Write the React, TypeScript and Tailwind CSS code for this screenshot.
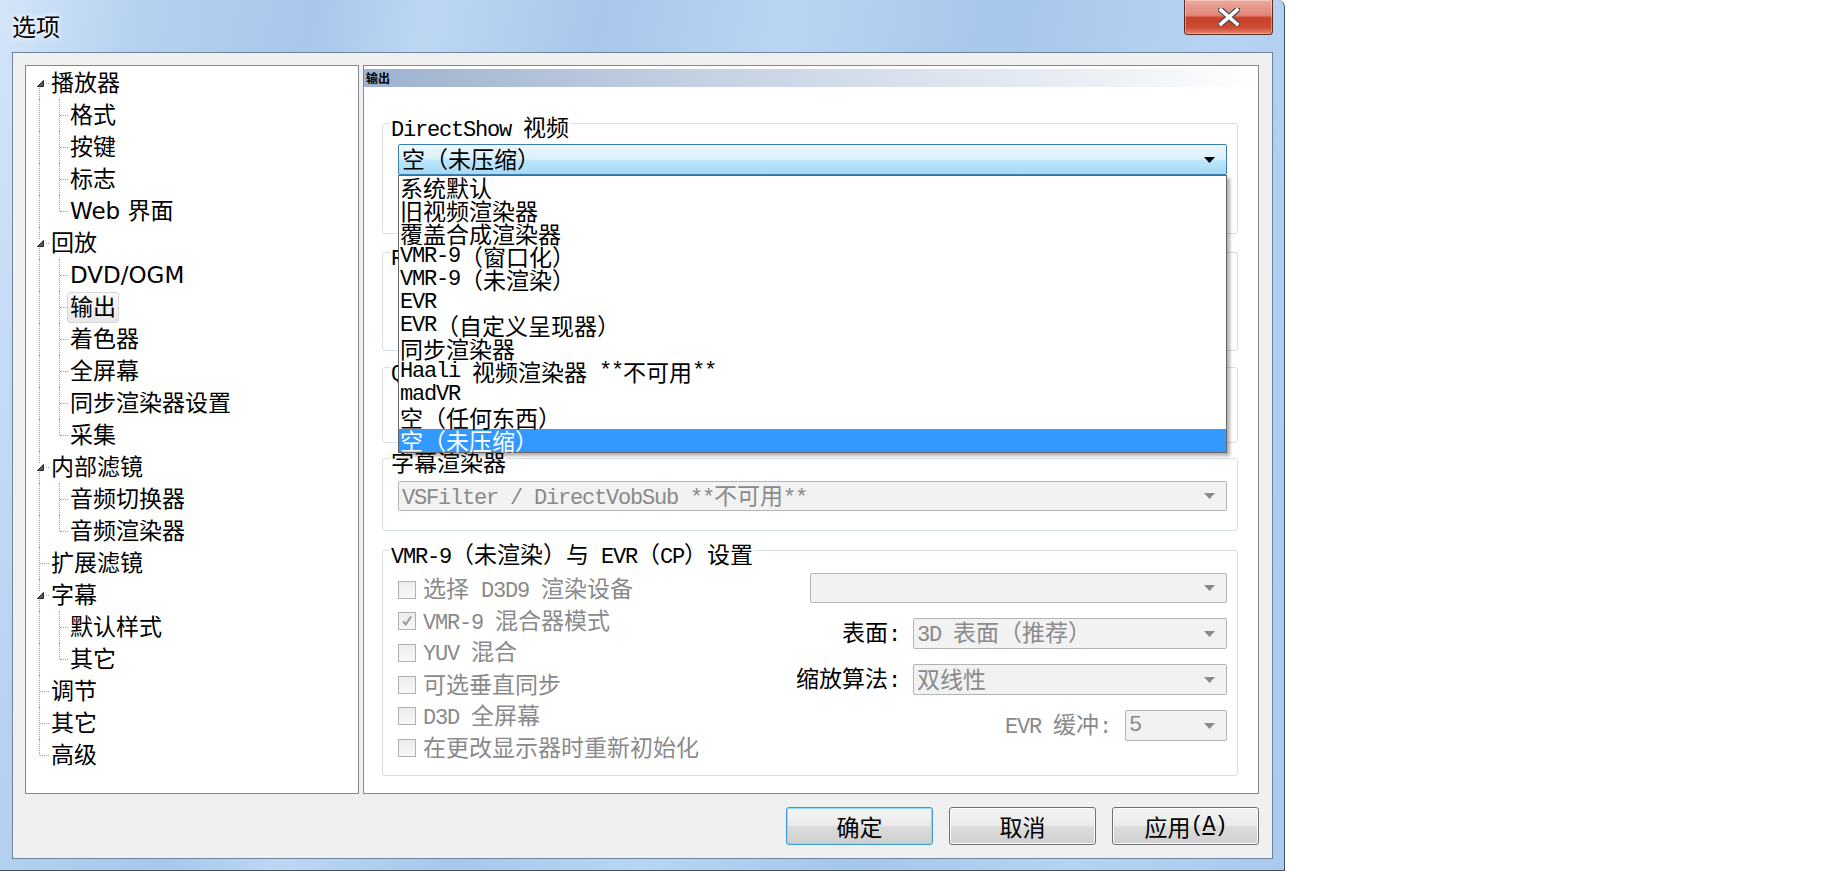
import type { ReactNode } from "react";

const TREE_FONT = "font-['DejaVu_Sans','Noto_Sans_CJK_SC',sans-serif]";
const LATIN = "font-['Liberation_Mono',monospace] text-[22px] tracking-[-1.2px]";

type TreeItem = {
  label: string;
  level: 0 | 1;
  expanded?: boolean;
  last?: boolean;
  selected?: boolean;
};

const TREE: TreeItem[] = [
  { label: "播放器", level: 0, expanded: true },
  { label: "格式", level: 1 },
  { label: "按键", level: 1 },
  { label: "标志", level: 1 },
  { label: "Web 界面", level: 1, last: true },
  { label: "回放", level: 0, expanded: true },
  { label: "DVD/OGM", level: 1 },
  { label: "输出", level: 1, selected: true },
  { label: "着色器", level: 1 },
  { label: "全屏幕", level: 1 },
  { label: "同步渲染器设置", level: 1 },
  { label: "采集", level: 1, last: true },
  { label: "内部滤镜", level: 0, expanded: true },
  { label: "音频切换器", level: 1 },
  { label: "音频渲染器", level: 1, last: true },
  { label: "扩展滤镜", level: 0 },
  { label: "字幕", level: 0, expanded: true },
  { label: "默认样式", level: 1 },
  { label: "其它", level: 1, last: true },
  { label: "调节", level: 0 },
  { label: "其它", level: 0 },
  { label: "高级", level: 0, last: true },
];

const RENDERERS = [
  "系统默认",
  "旧视频渲染器",
  "覆盖合成渲染器",
  "VMR-9（窗口化）",
  "VMR-9（未渲染）",
  "EVR",
  "EVR（自定义呈现器）",
  "同步渲染器",
  "Haali 视频渲染器 **不可用**",
  "madVR",
  "空（任何东西）",
  "空（未压缩）",
];

const CHECKS = [
  { label: "选择 D3D9 渲染设备", checked: false },
  { label: "VMR-9 混合器模式", checked: true },
  { label: "YUV 混合", checked: false },
  { label: "可选垂直同步", checked: false },
  { label: "D3D 全屏幕", checked: false },
  { label: "在更改显示器时重新初始化", checked: false },
];

// dialog text mixes half-width latin runs with full-width CJK, like SimSun does
function Txt({ s }: { s: string }) {
  const parts = s.split(/([\x20-\x7e]+)/).filter(Boolean);
  return (
    <>
      {parts.map((p, i) =>
        /^[\x20-\x7e]+$/.test(p) ? (
          <span key={i} className={LATIN}>
            {p}
          </span>
        ) : (
          <span key={i} className="font-['Noto_Sans_CJK_SC',sans-serif] text-[23px]">
            {p}
          </span>
        ),
      )}
    </>
  );
}

function Arrow({ disabled }: { disabled?: boolean }) {
  return (
    <svg width="11" height="6" viewBox="0 0 11 6" className="shrink-0">
      <path d="M0 0H11L5.5 6Z" fill={disabled ? "#8a8a8a" : "#000"} />
    </svg>
  );
}

function DisabledCombo({ text, className }: { text?: string; className: string }) {
  return (
    <div
      className={`flex items-center justify-between rounded-[2px] border border-[#b4b4b4] bg-[#f2f2f2] pl-[3px] pr-[11px] text-[#8a8a8a] ${className}`}
    >
      <span className="whitespace-pre leading-[24px]">
        <Txt s={text ?? ""} />
      </span>
      <Arrow disabled />
    </div>
  );
}

function Group({
  label,
  className,
  children,
}: {
  label: string;
  className: string;
  children?: ReactNode;
}) {
  return (
    <div className={`rounded-[3px] border border-[#d5dfe5] ${className}`}>
      <div className="-mt-[9px] ml-[7px] h-[22px] w-fit bg-white px-[1px] leading-[22px] whitespace-pre">
        <Txt s={label} />
      </div>
      {children}
    </div>
  );
}

function TreeRow({ item, index }: { item: TreeItem; index: number }) {
  const first = index === 0;
  const lastRow = index === TREE.length - 1;
  return (
    <div className="relative h-[32px]">
      <span
        className={`absolute left-[13px] border-l border-dotted border-[#a0a0a0] ${
          first ? "top-[16px] bottom-0" : lastRow ? "top-0 h-[16px]" : "inset-y-0"
        }`}
      />
      {item.level === 1 ? (
        <span
          className={`absolute left-[33px] border-l border-dotted border-[#a0a0a0] ${
            item.last ? "top-0 h-[16px]" : "inset-y-0"
          }`}
        />
      ) : null}
      <span
        className={`absolute top-[16px] border-t border-dotted border-[#a0a0a0] ${
          item.level === 0 ? "left-[14px] w-[9px]" : "left-[34px] w-[8px]"
        }`}
      />
      {item.expanded ? (
        <span className="absolute left-[10px] top-[12px] bg-white p-px">
          <svg width="7" height="7" viewBox="0 0 7 7" className="block">
            <path d="M6.5 0.5V6.5H0.5Z" fill="#595959" stroke="#262626" strokeWidth="1" />
          </svg>
        </span>
      ) : null}
      <div
        className={`flex h-full items-center ${item.level === 0 ? "pl-[25px]" : "pl-[44px]"}`}
      >
        {item.selected ? (
          <span className="-ml-[3px] flex h-[31px] items-center rounded-[3px] border border-[#d6d6d6] bg-[linear-gradient(to_bottom,#fafafa,#e8e8e8)] px-[2px]">
            {item.label}
          </span>
        ) : (
          <span className="whitespace-pre">{item.label}</span>
        )}
      </div>
    </div>
  );
}

function CloseButton() {
  return (
    <div className="flex h-[35px] w-[89px] items-center justify-center rounded-b-[4px] border border-t-0 border-[#5b2a22] bg-[linear-gradient(to_bottom,#eca89e_0%,#e08778_45%,#c9412a_52%,#cc4a32_80%,#e3846d_100%)] shadow-[inset_0_0_0_1px_rgba(255,255,255,0.35)]">
      <svg width="22" height="18" viewBox="0 0 22 18">
        <path d="M3 2L19 16M19 2L3 16" stroke="#4a4a4a" strokeWidth="6" strokeLinecap="square" />
        <path d="M3 2L19 16M19 2L3 16" stroke="#ffffff" strokeWidth="3.6" strokeLinecap="square" />
      </svg>
    </div>
  );
}

function DialogButton({ children, primary }: { children: ReactNode; primary?: boolean }) {
  return (
    <button
      className={`flex h-[38px] w-[147px] items-center justify-center whitespace-pre rounded-[3px] border bg-[linear-gradient(to_bottom,#f3f3f3_0%,#ebebeb_48%,#dcdcdc_52%,#cfcfcf_100%)] leading-[24px] text-black ${
        primary
          ? "border-[#3c9bd4] shadow-[inset_0_0_0_1px_#8fdcf8]"
          : "border-[#707070] shadow-[inset_0_0_0_1px_#fbfbfb]"
      }`}
    >
      {children}
    </button>
  );
}

export default function App() {
  return (
    <div className="flex h-[871px] w-[1839px] overflow-hidden bg-white">
      {/* window */}
      <div className="flex h-[871px] w-[1285px] flex-col rounded-tr-[7px] border-r border-b border-[#3f536b] bg-[linear-gradient(100deg,#d3e5f8_0%,#b5d1f0_10%,#a8c7eb_22%,#bdd7f3_30%,#a8c7eb_42%,#b9d5f3_55%,#a6c6ea_70%,#b7d3f2_85%,#aac9ed_100%)]">
        <div className="flex h-[52px] shrink-0 items-start justify-between pl-[12px] pr-[11px]">
          <div className="pt-[12px] text-[24px] leading-[28px] text-black font-['Noto_Sans_CJK_SC',sans-serif] [text-shadow:0_0_8px_#fff,0_0_4px_#fff]">
            选项
          </div>
          <CloseButton />
        </div>

        {/* client area */}
        <div className="mb-[11px] ml-[12px] mr-[11px] flex h-[807px] flex-col border border-[#6f839b] bg-[#f0f0f0] pl-[12px] pr-[13px] pt-[12px]">
          <div className="flex h-[729px] gap-[4px]">
            {/* tree */}
            <div
              className={`h-full w-[334px] border border-[#828790] bg-white pt-px text-[23px] leading-[32px] text-black ${TREE_FONT}`}
            >
              {TREE.map((item, i) => (
                <TreeRow key={`${item.label}-${i}`} item={item} index={i} />
              ))}
            </div>

            {/* page */}
            <div className="flex h-full w-[896px] flex-col border border-[#828790] bg-white pt-[3px] text-black">
              <div className="flex h-[18px] shrink-0 items-center bg-[linear-gradient(to_right,#9cb2cf_0%,#c6d3e4_40%,#eef2f7_85%,#ffffff_100%)] pl-[2px] text-[12px] font-bold font-['Noto_Sans_CJK_SC',sans-serif]">
                输出
              </div>

              <div className="flex flex-col pl-[18px] pr-[20px]">
                <Group label="DirectShow 视频" className="mt-[36px] h-[111px]">
                  <div className="relative z-10 ml-[15px] mr-[10px] mt-[7px] h-[31px]">
                    <div className="flex h-full items-center justify-between whitespace-pre rounded-[2px] border border-[#3c7fb1] bg-[linear-gradient(to_bottom,#ecf7fd_0%,#dbf1fc_48%,#bee6fd_52%,#a7d9f5_100%)] pl-[3px] pr-[11px] leading-[24px]">
                      <span>
                        <Txt s="空（未压缩）" />
                      </span>
                      <Arrow />
                    </div>
                    <div className="absolute left-0 right-0 top-full border border-[#646464] bg-white shadow-[3px_3px_3px_rgba(0,0,0,0.3)]">
                      {RENDERERS.map((r, i) => (
                        <div
                          key={r}
                          className={`flex h-[23px] items-center whitespace-pre pl-[1px] leading-[23px] ${
                            i === RENDERERS.length - 1 ? "bg-[#3399ff] text-white" : "text-black"
                          }`}
                        >
                          <Txt s={r} />
                        </div>
                      ))}
                    </div>
                  </div>
                </Group>

                <Group label="RealMedia 视频" className="mt-[18px] h-[99px]" />
                <Group label="QuickTime 视频" className="mt-[16px] h-[76px]" />

                <Group label="字幕渲染器" className="mt-[15px] h-[73px]">
                  <DisabledCombo
                    text="VSFilter / DirectVobSub **不可用**"
                    className="ml-[15px] mr-[10px] mt-[9px] h-[30px]"
                  />
                </Group>

                <Group label="VMR-9（未渲染）与 EVR（CP）设置" className="mt-[19px] h-[226px]">
                  <div className="flex items-start justify-between">
                    <div className="ml-[15px] mt-[10px] flex flex-col">
                      {CHECKS.map((c) => (
                        <div key={c.label} className="flex h-[31.6px] items-center gap-[7px]">
                          <span className="flex h-[18px] w-[18px] items-center justify-center border border-[#b1b1b1] bg-[linear-gradient(to_bottom,#ececec,#f8f8f8)]">
                            {c.checked ? (
                              <svg width="12" height="12" viewBox="0 0 12 12">
                                <path d="M2 6.5L4.8 9.5L10 1.5" fill="none" stroke="#9a9a9a" strokeWidth="2" />
                              </svg>
                            ) : null}
                          </span>
                          <span className="whitespace-pre leading-[24px] text-[#8a8a8a]">
                            <Txt s={c.label} />
                          </span>
                        </div>
                      ))}
                    </div>

                    <div className="mr-[10px] mt-[9px] flex flex-col items-end gap-[15px]">
                      <DisabledCombo className="h-[30px] w-[417px]" />
                      <div className="flex items-center gap-[13px]">
                        <span className="leading-[24px]">
                          <Txt s="表面:" />
                        </span>
                        <DisabledCombo text="3D 表面（推荐）" className="h-[31px] w-[314px]" />
                      </div>
                      <div className="flex items-center gap-[13px]">
                        <span className="leading-[24px]">
                          <Txt s="缩放算法:" />
                        </span>
                        <DisabledCombo text="双线性" className="h-[31px] w-[314px]" />
                      </div>
                      <div className="flex items-center gap-[14px]">
                        <span className="whitespace-pre leading-[24px] text-[#8a8a8a]">
                          <Txt s="EVR 缓冲:" />
                        </span>
                        <DisabledCombo text="5" className="h-[31px] w-[102px]" />
                      </div>
                    </div>
                  </div>
                </Group>
              </div>
            </div>
          </div>

          <div className="mt-[13px] flex justify-end gap-[16px]">
            <DialogButton primary>
              <Txt s="确定" />
            </DialogButton>
            <DialogButton>
              <Txt s="取消" />
            </DialogButton>
            <DialogButton>
              <Txt s="应用" />
              <span className={LATIN}>
                (<span className="underline">A</span>)
              </span>
            </DialogButton>
          </div>
        </div>
      </div>
    </div>
  );
}
